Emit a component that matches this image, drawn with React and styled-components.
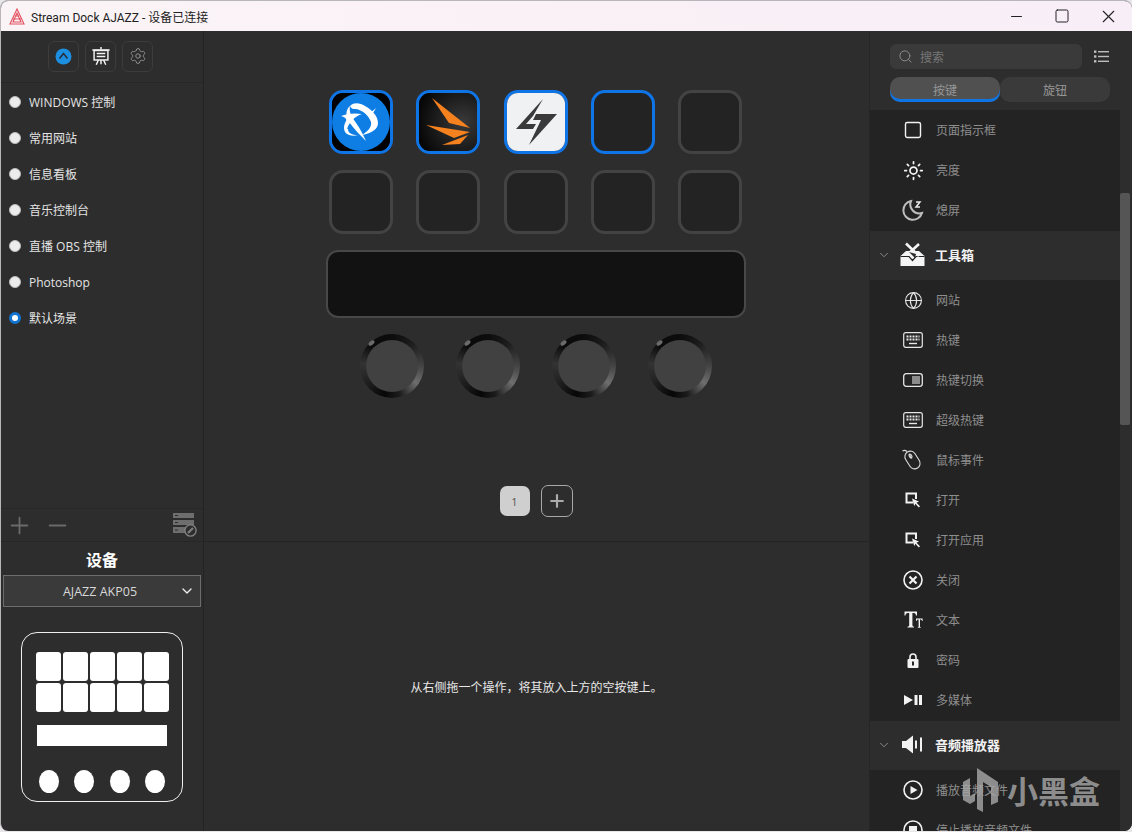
import React from 'react';
import styled, { createGlobalStyle } from 'styled-components';
import { Search, Settings, Sun, Globe, Plus, Minus, ChevronDown, X, Square } from 'lucide-react';

const GlobalStyle = createGlobalStyle`
  html, body {
    margin: 0;
    padding: 0;
    background: #e9e6ea;
  }
  * {
    box-sizing: border-box;
  }
`;

const scenes = [
  { name: 'WINDOWS 控制' },
  { name: '常用网站' },
  { name: '信息看板' },
  { name: '音乐控制台' },
  { name: '直播 OBS 控制' },
  { name: 'Photoshop' },
  { name: '默认场景', selected: true },
];

const LogoIcon = () => (
  <svg width="16" height="17" viewBox="0 0 16 17" fill="none" stroke="#e2505f" strokeWidth="1.1">
    <path d="M8 1 L15 16 H1 Z" />
    <path d="M8 5 L12 14 H4 Z" />
    <path d="M4 11 H12 M6 8 H10" />
  </svg>
);

const PresentIcon = () => (
  <svg width="18" height="19" viewBox="0 0 20 22" fill="none" stroke="#f2f2f2" strokeWidth="1.7">
    <path d="M10 0 V3" />
    <path d="M0 3.5 H20" />
    <rect x="2" y="4" width="16" height="11" />
    <path d="M5 7.5 H15 M5 11 H15" />
    <path d="M7 15 L4.5 20.5 M13 15 L15.5 20.5 M10 15 V20" />
  </svg>
);

const BrandIcon = () => (
  <svg width="17" height="17" viewBox="0 0 17 17">
    <circle cx="8.5" cy="8.5" r="8" fill="#1d8fe0" />
    <path d="M4.5 10.5 L8.5 5.5 L12.5 10.5" fill="none" stroke="#243040" strokeWidth="1.6" />
  </svg>
);

const ListIcon = () => (
  <svg width="15" height="13" viewBox="0 0 15 13" fill="#bdbdbd">
    <rect x="0" y="0.5" width="2.4" height="2.4" />
    <rect x="4" y="1" width="11" height="1.4" />
    <rect x="0" y="5.3" width="2.4" height="2.4" />
    <rect x="4" y="5.8" width="11" height="1.4" />
    <rect x="0" y="10.1" width="2.4" height="2.4" />
    <rect x="4" y="10.6" width="11" height="1.4" />
  </svg>
);

const ManageIcon = () => (
  <svg width="24" height="24" viewBox="0 0 24 24">
    <rect x="0" y="0" width="21" height="5" fill="#6e6e6e" />
    <rect x="0" y="7" width="21" height="5" fill="#6e6e6e" />
    <rect x="0" y="14" width="17" height="6" fill="#6e6e6e" />
    <path d="M2 2.5 H5 M2 9.5 H5 M2 17 H5" stroke="#2d2d2d" strokeWidth="1" />
    <circle cx="17.5" cy="17.5" r="5.6" fill="#2d2d2d" stroke="#808080" strokeWidth="1.4" />
    <path d="M15 20 L20 15" stroke="#808080" strokeWidth="2.2" />
  </svg>
);

const BattleLogo = () => (
  <svg width="58" height="58" viewBox="0 0 58 58" fill="#fff">
    <rect width="58" height="58" rx="8" fill="#000" />
    <circle cx="29" cy="29" r="29" fill="#0e7de4" />
    <path d="M18 13 C22 9 28 10 33 13 C40 17 46 23 46 30 C46 36 40 40 30 42 C36 38 40 34 39 29 C37 22 28 15 22 16 C20 16 19 15 18 13 Z" />
    <path d="M18 13 C17 18 19 23 22 27 C27 34 30 39 34 48 C28 42 22 36 17 29 C13 23 14 16 18 13 Z" />
    <path d="M9 23 C16 20 24 20 30 21 C24 23 21 26 18 30 C15 34 14 38 17 42 C11 40 11 33 14 28 C15 26 13 24 9 23 Z" />
    <path d="M44 15 C42 19 40 22 37 24 L35 21 C38 20 41 18 44 15 Z" />
    <path d="M14 36 C13 41 18 44 26 42 C20 42 16 40 16 36 Z" />
  </svg>
);

const MarkLogo = () => (
  <svg width="58" height="58" viewBox="0 0 58 58">
    <defs>
      <radialGradient id="markBg" cx="0.75" cy="0.5" r="0.8">
        <stop offset="0" stopColor="#3a3a3a" />
        <stop offset="1" stopColor="#060606" />
      </radialGradient>
    </defs>
    <rect width="58" height="58" fill="url(#markBg)" />
    <path d="M13 5 L51 35 L30 30 Z" fill="#f5821f" />
    <path d="M7 32 L51 39 L35 45 Z" fill="#f5821f" />
    <path d="M23 52 L49 42 L41 51 Z" fill="#f5821f" />
  </svg>
);

const BoltLogo = () => (
  <svg width="58" height="58" viewBox="0 0 58 58">
    <rect width="58" height="58" fill="#f0f1f3" />
    <path d="M36 6 L9 36 H26 L29 31 H19 L26 23 Z" fill="#3a3a3a" />
    <path d="M50 21 H29 L26 27 H34 L22 52 Z" fill="#3a3a3a" />
  </svg>
);

const MoonIcon = () => (
  <svg width="22" height="22" viewBox="0 0 22 22" fill="none" stroke="#bdbdbd" strokeWidth="2">
    <path d="M9 2 A9.5 9.5 0 1 0 20 14 A9 9 0 0 1 9 2 Z" />
    <path d="M14 3 H18 L14 8 H18" stroke="#e8e8e8" strokeWidth="1.5" />
  </svg>
);

const KeyboardIcon = () => (
  <svg width="20" height="16" viewBox="0 0 20 16" fill="none">
    <rect x="0.7" y="0.7" width="18.6" height="14.6" rx="2" stroke="#e6e6e6" strokeWidth="1.2" />
    <path d="M3.5 4.5 H16.5 M3.5 7.5 H16.5" stroke="#e6e6e6" strokeWidth="1.8" strokeDasharray="2 1" />
    <path d="M6 11.5 H14" stroke="#e6e6e6" strokeWidth="1.4" />
  </svg>
);

const ToggleIcon = () => (
  <svg width="20" height="14" viewBox="0 0 20 14" fill="none">
    <rect x="0.7" y="0.7" width="18.6" height="12.6" rx="2.5" stroke="#e6e6e6" strokeWidth="1.3" />
    <rect x="9" y="3" width="8" height="8" fill="#8c8c8c" />
  </svg>
);

const MouseIcon = () => (
  <svg width="22" height="22" viewBox="0 0 22 22" fill="none" stroke="#dcdcdc" strokeWidth="1.1">
    <path d="M0.5 2 C2 1 3.5 1 5 2.5" />
    <rect x="5" y="1.5" width="11" height="19" rx="5.5" transform="rotate(-32 10.5 11)" />
    <path d="M7 5 L10 9.5" />
    <ellipse cx="8.5" cy="7" rx="1.2" ry="2" transform="rotate(-32 8.5 7)" />
  </svg>
);

const OpenIcon = () => (
  <svg width="16" height="16" viewBox="0 0 16 16" fill="none">
    <path d="M8 10.5 H1.5 V1.5 H11 V7" stroke="#f2f2f2" strokeWidth="2" />
    <path d="M7 6.5 L14 9.5 L11.5 10.8 L15 14.2 L13.8 15.4 L10.4 11.8 L9.2 14 Z" fill="#f2f2f2" />
  </svg>
);

const CloseCircleIcon = () => (
  <svg width="20" height="20" viewBox="0 0 20 20" fill="none" stroke="#f2f2f2">
    <circle cx="10" cy="10" r="9" strokeWidth="1.6" />
    <path d="M6.5 6.5 L13.5 13.5 M13.5 6.5 L6.5 13.5" strokeWidth="2.2" />
  </svg>
);

const TextIcon = () => (
  <svg width="19" height="18" viewBox="0 0 19 18" fill="#f2f2f2">
    <path d="M0.5 0.5 H13 V4.5 H12 C11.8 2.5 11 2 8.4 2 V14 C8.4 15.4 9 15.6 10 15.7 V16.5 H3.5 V15.7 C4.6 15.6 5.2 15.4 5.2 14 V2 C2.5 2 1.7 2.5 1.5 4.5 H0.5 Z" />
    <path d="M12 7.5 H18.6 V10 H18 C17.9 9 17.5 8.5 16 8.5 V15.4 C16 16 16.3 16.1 16.9 16.2 V16.7 H13.7 V16.2 C14.3 16.1 14.6 16 14.6 15.4 V8.5 C13.1 8.5 12.7 9 12.6 10 H12 Z" />
  </svg>
);

const LockIcon = () => (
  <svg width="12" height="15" viewBox="0 0 12 15">
    <path d="M3 6 V4 A3 3 0 0 1 9 4 V6" fill="none" stroke="#f2f2f2" strokeWidth="1.6" />
    <rect x="0.5" y="6" width="11" height="9" rx="1" fill="#f2f2f2" />
    <rect x="5" y="8.5" width="2" height="4" fill="#232323" />
  </svg>
);

const MediaIcon = () => (
  <svg width="18" height="10" viewBox="0 0 18 10" fill="#f2f2f2">
    <path d="M0 0 L9 5 L0 10 Z" />
    <rect x="10.5" y="0" width="3" height="10" />
    <rect x="15" y="0" width="3" height="10" />
  </svg>
);

const PlayCircleIcon = () => (
  <svg width="20" height="20" viewBox="0 0 20 20">
    <circle cx="10" cy="10" r="9" fill="none" stroke="#f2f2f2" strokeWidth="1.6" />
    <path d="M7.5 6 L14.5 10 L7.5 14 Z" fill="#f2f2f2" />
  </svg>
);

const StopCircleIcon = () => (
  <svg width="20" height="20" viewBox="0 0 20 20">
    <circle cx="10" cy="10" r="9" fill="none" stroke="#f2f2f2" strokeWidth="1.6" />
    <rect x="6" y="6" width="8" height="8" fill="#f2f2f2" />
  </svg>
);

const ToolboxIcon = () => (
  <svg width="25" height="25" viewBox="0 0 25 25">
    <path d="M0.5 24 V14 L6 9 H19 L24.5 14 V24 Z" fill="#f5f5f5" />
    <path d="M0.5 14.5 H9 L12.5 18.5 L16 14.5 H24.5" fill="none" stroke="#232323" strokeWidth="1.2" />
    <path d="M6 1.5 L19 14 M19 2 L7 13" stroke="#f5f5f5" strokeWidth="2.6" />
    <path d="M9 10 L15 16 L16 12 Z" fill="#2d2d2d" />
  </svg>
);

const SpeakerIcon = () => (
  <svg width="20" height="19" viewBox="0 0 20 19" fill="#f2f2f2">
    <path d="M0 6 H4 L11 0.5 V18.5 L4 13 H0 Z" />
    <rect x="13" y="5.5" width="2" height="8" />
    <rect x="18" y="2.5" width="2" height="14" />
  </svg>
);

const WatermarkLogo = () => (
  <svg width="38" height="44" viewBox="0 0 38 44" fill="#a8a8a8" fillOpacity="0.8">
    <path d="M15 0 L36 14 V34 L29 37 V19 L21 14 V44 L15 41 Z" />
    <path d="M1 14 L8 10 V28 L13 25 V33 L8 36 L1 32 Z" />
  </svg>
);

const actionGroups = [
  {
    rows: [
      { label: '页面指示框', icon: <Square size={20} color="#f2f2f2" strokeWidth={1.7} /> },
      { label: '亮度', icon: <Sun size={21} color="#f2f2f2" strokeWidth={2} /> },
      { label: '熄屏', icon: <MoonIcon /> },
    ],
  },
  {
    title: '工具箱',
    icon: <ToolboxIcon />,
    rows: [
      { label: '网站', icon: <Globe size={19} color="#e6e6e6" strokeWidth={1.4} /> },
      { label: '热键', icon: <KeyboardIcon /> },
      { label: '热键切换', icon: <ToggleIcon /> },
      { label: '超级热键', icon: <KeyboardIcon /> },
      { label: '鼠标事件', icon: <MouseIcon /> },
      { label: '打开', icon: <OpenIcon /> },
      { label: '打开应用', icon: <OpenIcon /> },
      { label: '关闭', icon: <CloseCircleIcon /> },
      { label: '文本', icon: <TextIcon /> },
      { label: '密码', icon: <LockIcon /> },
      { label: '多媒体', icon: <MediaIcon /> },
    ],
  },
  {
    title: '音频播放器',
    icon: <SpeakerIcon />,
    rows: [
      { label: '播放音频文件', icon: <PlayCircleIcon /> },
      { label: '停止播放音频文件', icon: <StopCircleIcon /> },
    ],
  },
];

const keys = [
  { id: 1, active: true, logo: <BattleLogo /> },
  { id: 2, active: true, logo: <MarkLogo /> },
  { id: 3, active: true, logo: <BoltLogo /> },
  { id: 4, active: true },
  { id: 5 },
  { id: 6 },
  { id: 7 },
  { id: 8 },
  { id: 9 },
  { id: 10 },
];

const App = () => (
  <Shell>
    <GlobalStyle />
    <TitleBar>
      <TitleLeft>
        <LogoIcon />
        <TitleText>Stream Dock AJAZZ - 设备已连接</TitleText>
      </TitleLeft>
      <WindowButtons>
        <WindowButton><Minus size={17} strokeWidth={1.6} /></WindowButton>
        <WindowButton><Square size={16} strokeWidth={1.5} /></WindowButton>
        <WindowButton><X size={21} strokeWidth={1.3} /></WindowButton>
      </WindowButtons>
    </TitleBar>

    <Main>
      <LeftPanel>
        <ModeBar>
          <ModeButton><BrandIcon /></ModeButton>
          <ModeButton><PresentIcon /></ModeButton>
          <ModeButton><Settings size={18} color="#9a9a9a" strokeWidth={1.2} /></ModeButton>
        </ModeBar>
        <SceneList>
          {scenes.map((scene) => (
            <SceneRow key={scene.name}>
              <Radio $selected={scene.selected} />
              <SceneName>{scene.name}</SceneName>
            </SceneRow>
          ))}
        </SceneList>
        <SceneTools>
          <Plus size={27} color="#6a6a6a" strokeWidth={1.6} />
          <Minus size={27} color="#6a6a6a" strokeWidth={1.6} />
          <ToolSpacer />
          <ManageIcon />
        </SceneTools>
        <DeviceSection>
          <DeviceTitle>设备</DeviceTitle>
          <DeviceSelect>
            <span>AJAZZ AKP05</span>
            <SelectArrow><ChevronDown size={16} color="#eee" strokeWidth={2} /></SelectArrow>
          </DeviceSelect>
          <DevicePreview>
            <PreviewKeys>
              {keys.map((k) => <PreviewKey key={k.id} />)}
            </PreviewKeys>
            <PreviewStrip />
            <PreviewKnobs>
              {[0, 1, 2, 3].map((i) => <PreviewKnob key={i} />)}
            </PreviewKnobs>
          </DevicePreview>
        </DeviceSection>
      </LeftPanel>

      <CenterPanel>
        <Canvas>
          <KeyGrid>
            {keys.map((k) => (
              <KeySlot key={k.id} $active={k.active}>{k.logo}</KeySlot>
            ))}
          </KeyGrid>
          <TouchStrip />
          <KnobRow>
            {[0, 1, 2, 3].map((i) => (
              <Knob key={i}>
                <KnobFace />
                <KnobDot />
              </Knob>
            ))}
          </KnobRow>
          <Pager>
            <PageButton>1</PageButton>
            <AddPage><Plus size={20} color="#aaa" strokeWidth={2.6} /></AddPage>
          </Pager>
        </Canvas>
        <Hint>从右侧拖一个操作，将其放入上方的空按键上。</Hint>
      </CenterPanel>

      <RightPanel>
        <RightHeader>
          <SearchRow>
            <SearchBox>
              <Search size={15} color="#8a8a8a" strokeWidth={1.6} />
              <SearchText>搜索</SearchText>
            </SearchBox>
            <ListIcon />
          </SearchRow>
          <Tabs>
            <Tab $active>按键</Tab>
            <Tab>旋钮</Tab>
          </Tabs>
        </RightHeader>
        <ActionArea>
          <ActionList>
            {actionGroups.map((group, i) => (
              <div key={i}>
                {group.title && (
                  <GroupHeader>
                    <ChevronDown size={14} color="#8f8f8f" strokeWidth={1.6} />
                    <GroupIcon>{group.icon}</GroupIcon>
                    <GroupTitle>{group.title}</GroupTitle>
                  </GroupHeader>
                )}
                {group.rows.map((row) => (
                  <ActionRow key={row.label}>
                    <ActionIcon>{row.icon}</ActionIcon>
                    <ActionLabel>{row.label}</ActionLabel>
                  </ActionRow>
                ))}
              </div>
            ))}
          </ActionList>
          <ScrollTrack>
            <ScrollThumb />
          </ScrollTrack>
        </ActionArea>
      </RightPanel>
    </Main>

    <Watermark>
      <WatermarkLogo />
      <WatermarkText>小黑盒</WatermarkText>
    </Watermark>
  </Shell>
);

const Shell = styled.div`
  position: relative;
  width: 1132px;
  height: 831px;
  display: flex;
  flex-direction: column;
  overflow: hidden;
  border-radius: 8px;
  border: 1px solid #b8b6ba;
  border-right: none;
  border-bottom: none;
  background: #2d2d2d;
  font-family: "Open Sans", "Noto Sans CJK SC", sans-serif;
`;

const TitleBar = styled.div`
  height: 30px;
  flex: none;
  display: flex;
  align-items: center;
  justify-content: space-between;
  background: linear-gradient(90deg, #fbf4f6, #f8eef7);
`;

const TitleLeft = styled.div`
  display: flex;
  align-items: center;
  gap: 6px;
  padding-left: 8px;
`;

const TitleText = styled.span`
  font-family: Roboto, "Noto Sans CJK SC", sans-serif;
  font-size: 12px;
  color: #222;
`;

const WindowButtons = styled.div`
  display: flex;
  padding-right: 1px;
`;

const WindowButton = styled.div`
  width: 46px;
  height: 30px;
  display: flex;
  align-items: center;
  justify-content: center;
  color: #222;
`;

const Main = styled.div`
  flex: 1;
  min-height: 0;
  display: flex;
`;

const LeftPanel = styled.div`
  width: 203px;
  flex: none;
  display: flex;
  flex-direction: column;
  border-right: 1px solid #232323;
`;

const ModeBar = styled.div`
  height: 52px;
  flex: none;
  display: flex;
  align-items: center;
  justify-content: center;
  gap: 6px;
  padding: 0 3px 1px 0;
  border-bottom: 1px solid #262626;
`;

const ModeButton = styled.div`
  width: 31px;
  height: 31px;
  display: flex;
  align-items: center;
  justify-content: center;
  border: 1px solid #3c3c3c;
  border-radius: 6px;
`;

const SceneList = styled.div`
  flex: 1;
  padding-top: 1px;
`;

const SceneRow = styled.div`
  height: 36px;
  display: flex;
  align-items: center;
  padding-left: 8px;
  gap: 8px;
`;

const Radio = styled.span`
  width: 12px;
  height: 12px;
  flex: none;
  border-radius: 50%;
  background: ${(p) => (p.$selected ? '#fff' : '#ececec')};
  border: ${(p) => (p.$selected ? '3.5px solid #1274d0' : '1px solid #bbb')};
`;

const SceneName = styled.span`
  font-size: 12px;
  color: #e4e4e4;
`;

const SceneTools = styled.div`
  height: 34px;
  flex: none;
  display: flex;
  align-items: center;
  gap: 11px;
  padding: 0 6px 0 5px;
  border-top: 1px solid #262626;
  border-bottom: 1px solid #262626;
`;

const ToolSpacer = styled.div`
  flex: 1;
`;

const DeviceSection = styled.div`
  height: 289px;
  flex: none;
  display: flex;
  flex-direction: column;
  align-items: center;
  padding: 6px 2px 0;
`;

const DeviceTitle = styled.div`
  font-size: 16px;
  line-height: 24px;
  font-weight: 700;
  color: #fff;
`;

const DeviceSelect = styled.div`
  position: relative;
  width: 198px;
  height: 32px;
  margin-top: 3px;
  padding-right: 4px;
  display: flex;
  align-items: center;
  justify-content: center;
  background: #3a3a3a;
  border: 1px solid #6c6c6c;
  font-size: 12.5px;
  color: #d8d8d8;
`;

const SelectArrow = styled.span`
  position: absolute;
  right: 5px;
  top: 7px;
  display: flex;
`;

const DevicePreview = styled.div`
  width: 162px;
  height: 170px;
  margin-top: 25px;
  display: flex;
  flex-direction: column;
  align-items: center;
  padding-top: 19px;
  border: 1.5px solid #eee;
  border-radius: 16px;
`;

const PreviewKeys = styled.div`
  display: grid;
  grid-template-columns: repeat(5, 25px);
  grid-auto-rows: 29px;
  gap: 2px;
`;

const PreviewKey = styled.div`
  background: #fff;
  border-radius: 3px;
`;

const PreviewStrip = styled.div`
  width: 130px;
  height: 21px;
  margin-top: 13px;
  background: #fff;
`;

const PreviewKnobs = styled.div`
  display: flex;
  gap: 15.5px;
  margin-top: 24px;
`;

const PreviewKnob = styled.div`
  width: 20px;
  height: 23px;
  border-radius: 50%;
  background: #fff;
`;

const CenterPanel = styled.div`
  flex: 1;
  min-width: 0;
  display: flex;
  flex-direction: column;
  border-right: 1px solid #262626;
`;

const Canvas = styled.div`
  height: 511px;
  flex: none;
  display: flex;
  flex-direction: column;
  align-items: center;
  padding: 59px 1px 0 0;
  border-bottom: 1px solid #242424;
`;

const KeyGrid = styled.div`
  display: grid;
  grid-template-columns: repeat(5, 64px);
  grid-auto-rows: 64px;
  column-gap: 23.4px;
  row-gap: 16px;
  margin-right: 0.8px;
`;

const KeySlot = styled.div`
  display: flex;
  align-items: center;
  justify-content: center;
  overflow: hidden;
  background: #232323;
  border: 3px solid ${(p) => (p.$active ? '#0f74e6' : '#434343')};
  border-radius: 14px;
`;

const TouchStrip = styled.div`
  width: 420px;
  height: 68px;
  margin-top: 16px;
  background: #121212;
  border: 2px solid #484848;
  border-radius: 12px;
`;

const KnobRow = styled.div`
  display: flex;
  gap: 32px;
  margin-top: 16px;
`;

const Knob = styled.div`
  position: relative;
  width: 64px;
  height: 64px;
  display: flex;
  align-items: center;
  justify-content: center;
  border-radius: 50%;
  background: conic-gradient(#0c0c0c 0deg, #1c1c1c 40deg, #444 90deg, #6e6e6e 125deg, #1c1c1c 165deg, #070707 195deg, #222 240deg, #333 275deg, #0a0a0a 315deg, #0c0c0c 360deg);
`;

const KnobFace = styled.div`
  width: 52px;
  height: 52px;
  border-radius: 50%;
  background: #414141;
`;

const KnobDot = styled.span`
  position: absolute;
  top: 7px;
  left: 8px;
  width: 7px;
  height: 4px;
  border-radius: 50%;
  background: #6a6a6a;
  transform: rotate(-40deg);
`;

const Pager = styled.div`
  display: flex;
  align-items: center;
  gap: 11px;
  margin-top: 87px;
`;

const PageButton = styled.div`
  width: 30px;
  height: 30px;
  display: flex;
  align-items: center;
  justify-content: center;
  background: #cfcfcf;
  border-radius: 7px;
  font-size: 11px;
  color: #555;
`;

const AddPage = styled.div`
  width: 32px;
  height: 32px;
  display: flex;
  align-items: center;
  justify-content: center;
  border: 1.5px solid #a8a8a8;
  border-radius: 7px;
`;

const Hint = styled.div`
  flex: 1;
  display: flex;
  align-items: center;
  justify-content: center;
  font-size: 12px;
  color: #e8e8e8;
`;

const RightPanel = styled.div`
  width: 262px;
  flex: none;
  display: flex;
  flex-direction: column;
  min-height: 0;
`;

const RightHeader = styled.div`
  height: 79px;
  flex: none;
  display: flex;
  flex-direction: column;
  padding: 13px 0 0 20px;
  background: #2d2d2d;
`;

const SearchRow = styled.div`
  display: flex;
  align-items: center;
  gap: 12px;
`;

const SearchBox = styled.div`
  width: 192px;
  height: 25px;
  display: flex;
  align-items: center;
  gap: 7px;
  padding-left: 8px;
  background: #3a3a3a;
  border-radius: 6px;
`;

const SearchText = styled.span`
  font-size: 12px;
  color: #777;
`;

const Tabs = styled.div`
  display: flex;
  margin-top: 8px;
`;

const Tab = styled.div`
  width: 110px;
  height: 25px;
  display: flex;
  align-items: center;
  justify-content: center;
  font-size: 12px;
  color: #969696;
  border-radius: 10px;
  background: ${(p) => (p.$active ? '#505050' : '#3a3a3a')};
  box-shadow: ${(p) => (p.$active ? 'inset 0 -3px 0 #0f74e6' : 'none')};
`;

const ActionArea = styled.div`
  flex: 1;
  min-height: 0;
  display: flex;
`;

const ActionList = styled.div`
  flex: 1;
  min-width: 0;
  overflow: hidden;
  background: #232323;
`;

const GroupHeader = styled.div`
  height: 49px;
  margin-top: 1px;
  padding: 0 0 2px 7px;
  display: flex;
  align-items: center;
  background: #2d2d2d;
`;

const GroupIcon = styled.div`
  width: 30px;
  margin-left: 6px;
  display: flex;
  justify-content: center;
`;

const GroupTitle = styled.span`
  margin-left: 8px;
  font-size: 13px;
  font-weight: 700;
  color: #f2f2f2;
`;

const ActionRow = styled.div`
  height: 40px;
  display: flex;
  align-items: center;
  padding-left: 28px;
`;

const ActionIcon = styled.div`
  width: 30px;
  display: flex;
  justify-content: center;
  align-items: center;
`;

const ActionLabel = styled.span`
  margin-left: 8px;
  font-size: 12px;
  color: #8e8e8e;
`;

const ScrollTrack = styled.div`
  width: 12px;
  flex: none;
  background: #2d2d2d;
`;

const ScrollThumb = styled.div`
  width: 10px;
  height: 232px;
  margin-top: 83px;
  background: #555;
  border-radius: 2px;
`;

const Watermark = styled.div`
  position: absolute;
  left: 961px;
  top: 767px;
  display: flex;
  align-items: center;
  gap: 7px;
  pointer-events: none;
`;

const WatermarkText = styled.span`
  font-family: "Noto Sans CJK SC", sans-serif;
  font-size: 31px;
  line-height: 44px;
  font-weight: 700;
  color: rgba(170, 170, 170, 0.8);
`;

export default App;
